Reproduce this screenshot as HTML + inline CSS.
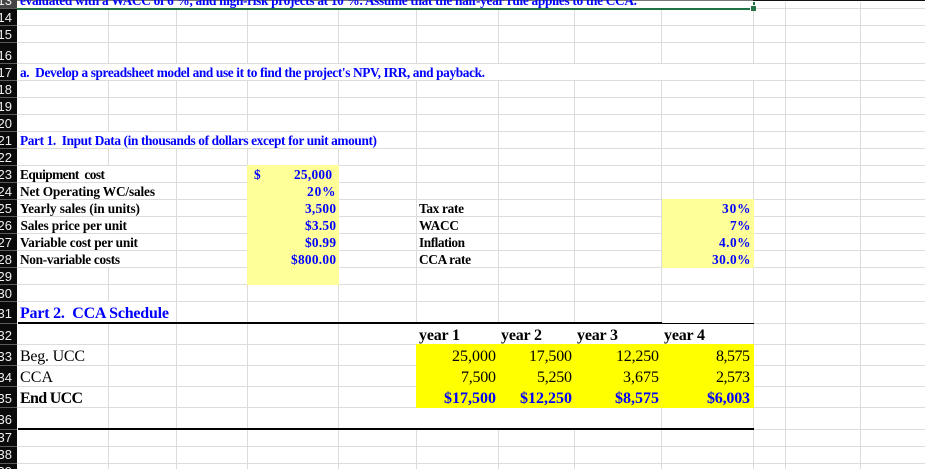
<!DOCTYPE html>
<html>
<head>
<meta charset="utf-8">
<style>
html,body{margin:0;padding:0;background:#fff;width:925px;height:469px;overflow:hidden}
svg{display:block}
text{font-family:"Liberation Serif","Times New Roman",serif;white-space:pre}
.h text{font-family:"Liberation Sans",Arial,sans-serif;font-size:13px;fill:#f0f0f0;text-anchor:end}
.b{font-weight:bold;font-size:13.33px}
.k{fill:#000}
.u{fill:#0000ff}
.l{font-size:16px}
</style>
</head>
<body>
<svg width="925" height="469" viewBox="0 0 925 469" xmlns="http://www.w3.org/2000/svg">
<!-- gridlines -->
<path shape-rendering="crispEdges" fill="none" stroke="#dcdcdc" stroke-width="1" d="
M753 8.500H925
M17 25.500H925 M17 42.500H925 M17 63.500H925 M17 80.500H925 M17 97.500H925 M17 114.500H925 M17 131.500H925 M17 148.500H925
M17 165.500H925 M17 182.500H925 M17 199.500H925 M17 216.500H925 M17 233.500H925 M17 250.500H925 M17 267.500H925 M17 284.500H925 M17 301.500H925
M753 323.500H925
M17 344.500H416 M753 344.500H925
M17 365.500H416 M753 365.500H925
M17 386.500H416 M753 386.500H925
M17 407.500H416 M753 407.500H925
M753 429.500H925
M17 446.500H925 M17 463.500H925
M108.500 9V63 M108.500 80V131 M108.500 148V165 M108.500 267V301 M108.500 323V469
M176.500 9V63 M176.500 80V131 M176.500 148V469
M247.500 9V63 M247.500 80V131 M247.500 148V469
M338.500 9V63 M338.500 80V131 M338.500 148V469
M416.500 9V63 M416.500 80V323 M416.500 429V469
M498.500 9V63 M498.500 80V323 M498.500 429V469
M574.500 9V63 M574.500 80V323 M574.500 429V469
M661.500 9V63 M661.500 80V323 M661.500 407V469
M753.500 9V63 M753.500 80V469
M785.500 2V469 M860.500 2V469"/>
<!-- fills -->
<rect x="247" y="165" width="92" height="120" fill="#ffff99"/>
<rect x="662" y="199" width="92" height="69" fill="#ffff99"/>
<rect x="416" y="344" width="338" height="64" fill="#ffff00"/>
<!-- black rules -->
<rect x="18" y="322" width="644" height="2" fill="#000"/>
<rect x="662" y="323" width="92" height="1" fill="#000"/>
<rect x="18" y="428" width="736" height="2" fill="#000"/>
<!-- row header -->
<rect x="0" y="0" width="17" height="469" fill="#0a0a0a"/>
<rect x="0" y="0" width="17" height="8" fill="#444"/>
<rect x="17" y="0" width="736" height="1" fill="#777"/>
<rect x="753" y="0" width="172" height="1" fill="#111"/>
<path shape-rendering="crispEdges" stroke="#5a5a5a" fill="none" d="M0 8.500H17 M0 25.500H17 M0 42.500H17 M0 63.500H17 M0 80.500H17 M0 97.500H17 M0 114.500H17 M0 131.500H17 M0 148.500H17 M0 165.500H17 M0 182.500H17 M0 199.500H17 M0 216.500H17 M0 233.500H17 M0 250.500H17 M0 267.500H17 M0 284.500H17 M0 301.500H17 M0 323.500H17 M0 344.500H17 M0 365.500H17 M0 386.500H17 M0 407.500H17 M0 429.500H17 M0 446.500H17 M0 463.500H17"/>
<g class="h">
<text x="12" y="5">13</text>
<text x="12" y="22">14</text>
<text x="12" y="39">15</text>
<text x="12" y="60">16</text>
<text x="12" y="77">17</text>
<text x="12" y="94">18</text>
<text x="12" y="111">19</text>
<text x="12" y="128">20</text>
<text x="12" y="145">21</text>
<text x="12" y="162">22</text>
<text x="12" y="179">23</text>
<text x="12" y="196">24</text>
<text x="12" y="213">25</text>
<text x="12" y="230">26</text>
<text x="12" y="247">27</text>
<text x="12" y="264">28</text>
<text x="12" y="281">29</text>
<text x="12" y="298">30</text>
<text x="12" y="318">31</text>
<text x="12" y="340">32</text>
<text x="12" y="361">33</text>
<text x="12" y="382">34</text>
<text x="12" y="403">35</text>
<text x="12" y="424">36</text>
<text x="12" y="442">37</text>
<text x="12" y="459">38</text>
<text x="12" y="476">39</text>
</g>
<!-- clipped top row text -->
<text class="b u" x="20" y="5" textLength="617" lengthAdjust="spacing">evaluated with a WACC of 6 %, and high-risk projects at 10 %. Assume that the half-year rule applies to the CCA.</text>
<rect x="17" y="8" width="733" height="2" fill="#217346"/>
<rect x="753" y="2" width="2" height="3" fill="#217346"/>
<rect x="751" y="6" width="5" height="5" fill="#217346"/>
<!-- headings -->
<text class="b u" x="20" y="77" textLength="465" lengthAdjust="spacing">a.  Develop a spreadsheet model and use it to find the project's NPV, IRR, and payback.</text>
<text class="b u" x="20" y="145" textLength="357" lengthAdjust="spacing">Part 1.  Input Data (in thousands of dollars except for unit amount)</text>
<!-- part 1 labels -->
<text class="b k" x="20" y="179" textLength="85" lengthAdjust="spacing">Equipment  cost</text>
<text class="b k" x="20" y="196" textLength="135" lengthAdjust="spacing">Net Operating WC/sales</text>
<text class="b k" x="20" y="213" textLength="120" lengthAdjust="spacing">Yearly sales (in units)</text>
<text class="b k" x="20.500" y="230" textLength="106.500" lengthAdjust="spacing">Sales price per unit</text>
<text class="b k" x="20" y="247" textLength="118" lengthAdjust="spacing">Variable cost per unit</text>
<text class="b k" x="20" y="264" textLength="100" lengthAdjust="spacing">Non-variable costs</text>
<!-- part 1 values -->
<text class="b u" x="254" y="179">$</text>
<text class="b u" x="294" y="179" textLength="38" lengthAdjust="spacing">25,000</text>
<text class="b u" x="307" y="196" textLength="28.500" lengthAdjust="spacing">20%</text>
<text class="b u" x="305" y="213" textLength="31" lengthAdjust="spacing">3,500</text>
<text class="b u" x="305" y="230" textLength="31" lengthAdjust="spacing">$3.50</text>
<text class="b u" x="305" y="247" textLength="31" lengthAdjust="spacing">$0.99</text>
<text class="b u" x="291" y="264" textLength="45" lengthAdjust="spacing">$800.00</text>
<!-- right labels -->
<text class="b k" x="419" y="213" textLength="45" lengthAdjust="spacing">Tax rate</text>
<text class="b k" x="419" y="230" textLength="40" lengthAdjust="spacing">WACC</text>
<text class="b k" x="419" y="247" textLength="46" lengthAdjust="spacing">Inflation</text>
<text class="b k" x="419" y="264" textLength="52" lengthAdjust="spacing">CCA rate</text>
<text class="b u" x="722" y="213" textLength="28.500" lengthAdjust="spacing">30%</text>
<text class="b u" x="730" y="230" textLength="20.500" lengthAdjust="spacing">7%</text>
<text class="b u" x="719" y="247" textLength="31.500" lengthAdjust="spacing">4.0%</text>
<text class="b u" x="712" y="264" textLength="38.500" lengthAdjust="spacing">30.0%</text>
<!-- part 2 -->
<text class="b u" style="font-size:16px" x="20" y="318" textLength="149" lengthAdjust="spacing">Part 2.  CCA Schedule</text>
<text class="l k" x="20" y="361" textLength="65" lengthAdjust="spacing">Beg. UCC</text>
<text class="l k" x="20" y="382" textLength="33" lengthAdjust="spacing">CCA</text>
<text class="l k" style="font-weight:bold" x="20" y="403" textLength="63" lengthAdjust="spacing">End UCC</text>
<g style="font-weight:bold">
<text class="l k" x="419" y="340" textLength="41" lengthAdjust="spacing">year 1</text>
<text class="l k" x="501" y="340" textLength="41" lengthAdjust="spacing">year 2</text>
<text class="l k" x="577" y="340" textLength="41" lengthAdjust="spacing">year 3</text>
<text class="l k" x="664" y="340" textLength="41" lengthAdjust="spacing">year 4</text>
</g>
<text class="l k" x="452" y="361" textLength="44" lengthAdjust="spacing">25,000</text>
<text class="l k" x="529" y="361" textLength="43" lengthAdjust="spacing">17,500</text>
<text class="l k" x="616" y="361" textLength="43" lengthAdjust="spacing">12,250</text>
<text class="l k" x="716" y="361" textLength="34" lengthAdjust="spacing">8,575</text>
<text class="l k" x="461" y="382" textLength="35" lengthAdjust="spacing">7,500</text>
<text class="l k" x="537" y="382" textLength="35" lengthAdjust="spacing">5,250</text>
<text class="l k" x="623" y="382" textLength="36" lengthAdjust="spacing">3,675</text>
<text class="l k" x="716" y="382" textLength="34" lengthAdjust="spacing">2,573</text>
<g style="font-weight:bold">
<text class="l u" x="444" y="403" textLength="52" lengthAdjust="spacing">$17,500</text>
<text class="l u" x="520" y="403" textLength="52" lengthAdjust="spacing">$12,250</text>
<text class="l u" x="615" y="403" textLength="44" lengthAdjust="spacing">$8,575</text>
<text class="l u" x="707" y="403" textLength="43" lengthAdjust="spacing">$6,003</text>
</g>
</svg>
</body>
</html>
